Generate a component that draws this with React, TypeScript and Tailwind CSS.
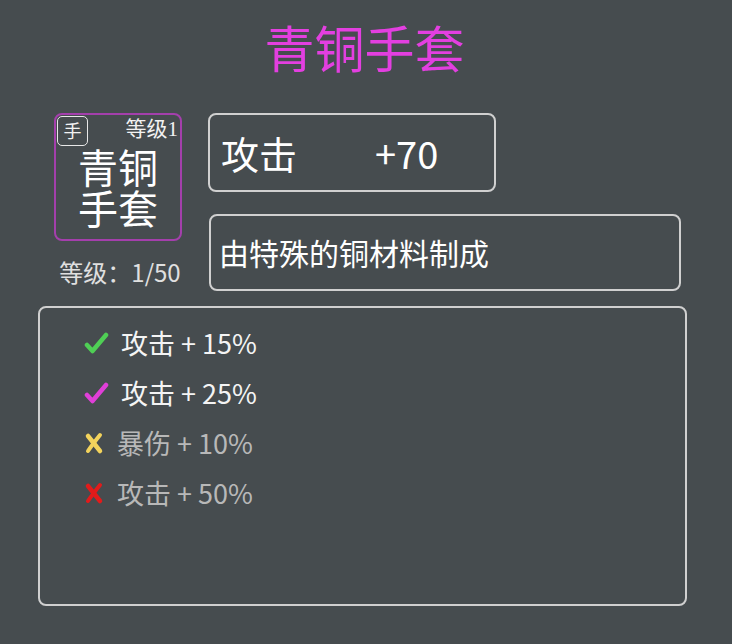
const font = { fontFamily: '"Noto Sans CJK SC", "Noto Sans", sans-serif' }

function Check({ color }: { color: string }) {
  return (
    <svg width="26" height="26" viewBox="0 0 26 26">
      <path d="M4 15 L9.5 21 L23 5" stroke={color} strokeWidth="4.5" strokeLinecap="round" strokeLinejoin="round" fill="none" />
    </svg>
  )
}

function Cross({ color }: { color: string }) {
  return (
    <svg width="22" height="24" viewBox="0 0 22 24">
      <path d="M5 5 C9 10 13 15 17 20" stroke={color} strokeWidth="4.5" strokeLinecap="round" fill="none" />
      <path d="M17 4 C13 9 9 14 5 20" stroke={color} strokeWidth="4" strokeLinecap="round" fill="none" />
    </svg>
  )
}

const effects = [
  { icon: <Check color="#4fcf55" />, text: '攻击 + 15%', active: true },
  { icon: <Check color="#e03fd8" />, text: '攻击 + 25%', active: true },
  { icon: <Cross color="#f3d35c" />, text: '暴伤 + 10%', active: false },
  { icon: <Cross color="#e21b1b" />, text: '攻击 + 50%', active: false },
]

export default function App() {
  return (
    <div className="w-full min-h-[644px] bg-[#464c4f] flex flex-col" style={font}>
      {/* Title */}
      <h1 className="pt-[19px] text-center text-[50px] leading-[54px] text-[#e33fe0] pr-[3px]">青铜手套</h1>

      {/* Item header */}
      <div className="flex gap-[26px] pl-[54px] mt-[40px]">
        <div className="flex flex-col items-center w-[128px]">
          <div className="w-[128px] h-[128px] rounded-[8px] border-2 border-[#a43fac] flex flex-col p-[1px]">
            <div className="flex justify-between items-start h-[30px]">
              <div className="w-[31px] h-[30px] rounded-[5px] border border-[#e8e8e8] text-[#f2f2f2] text-[18px] leading-[26px] text-center">
                手
              </div>
              <div className="text-[#f2f2f2] text-[21px] leading-[22px] pr-[1px]">
                等级<span style={{ fontFamily: '"Liberation Serif", serif' }}>1</span>
              </div>
            </div>
            <div className="text-center text-white text-[40px] leading-[41px]">
              青铜
              <br />
              手套
            </div>
          </div>
          <div className="mt-[16px] text-[#e0e0e0] text-[24px] leading-[30px] ml-[4px] whitespace-nowrap">等级：1/50</div>
        </div>

        <div className="flex flex-col gap-[22px]">
          <div className="w-[288px] h-[79px] rounded-[8px] border-2 border-[#d0d0d0] flex items-center pl-[11px] text-white text-[38px]">
            <span className="w-[154px]">攻击</span>
            <span>+70</span>
          </div>
          <div className="ml-[1px] w-[472px] h-[77px] rounded-[8px] border-2 border-[#d0d0d0] flex items-center pl-[8px] text-white text-[30px]">
            由特殊的铜材料制成
          </div>
        </div>
      </div>

      {/* Effects */}
      <div className="ml-[38px] mt-[15px] w-[649px] h-[300px] rounded-[8px] border-2 border-[#d0d0d0] pt-[10px] pl-[43px]">
        {effects.map((e, i) => (
          <div key={i} className="h-[50px] flex items-center">
            <span className="flex items-center">{e.icon}</span>
            <span className={`pl-[12px] text-[27px] ${e.active ? 'text-[#f4f4f4]' : 'text-[#b8b8b8]'}`}>{e.text}</span>
          </div>
        ))}
      </div>
    </div>
  )
}
